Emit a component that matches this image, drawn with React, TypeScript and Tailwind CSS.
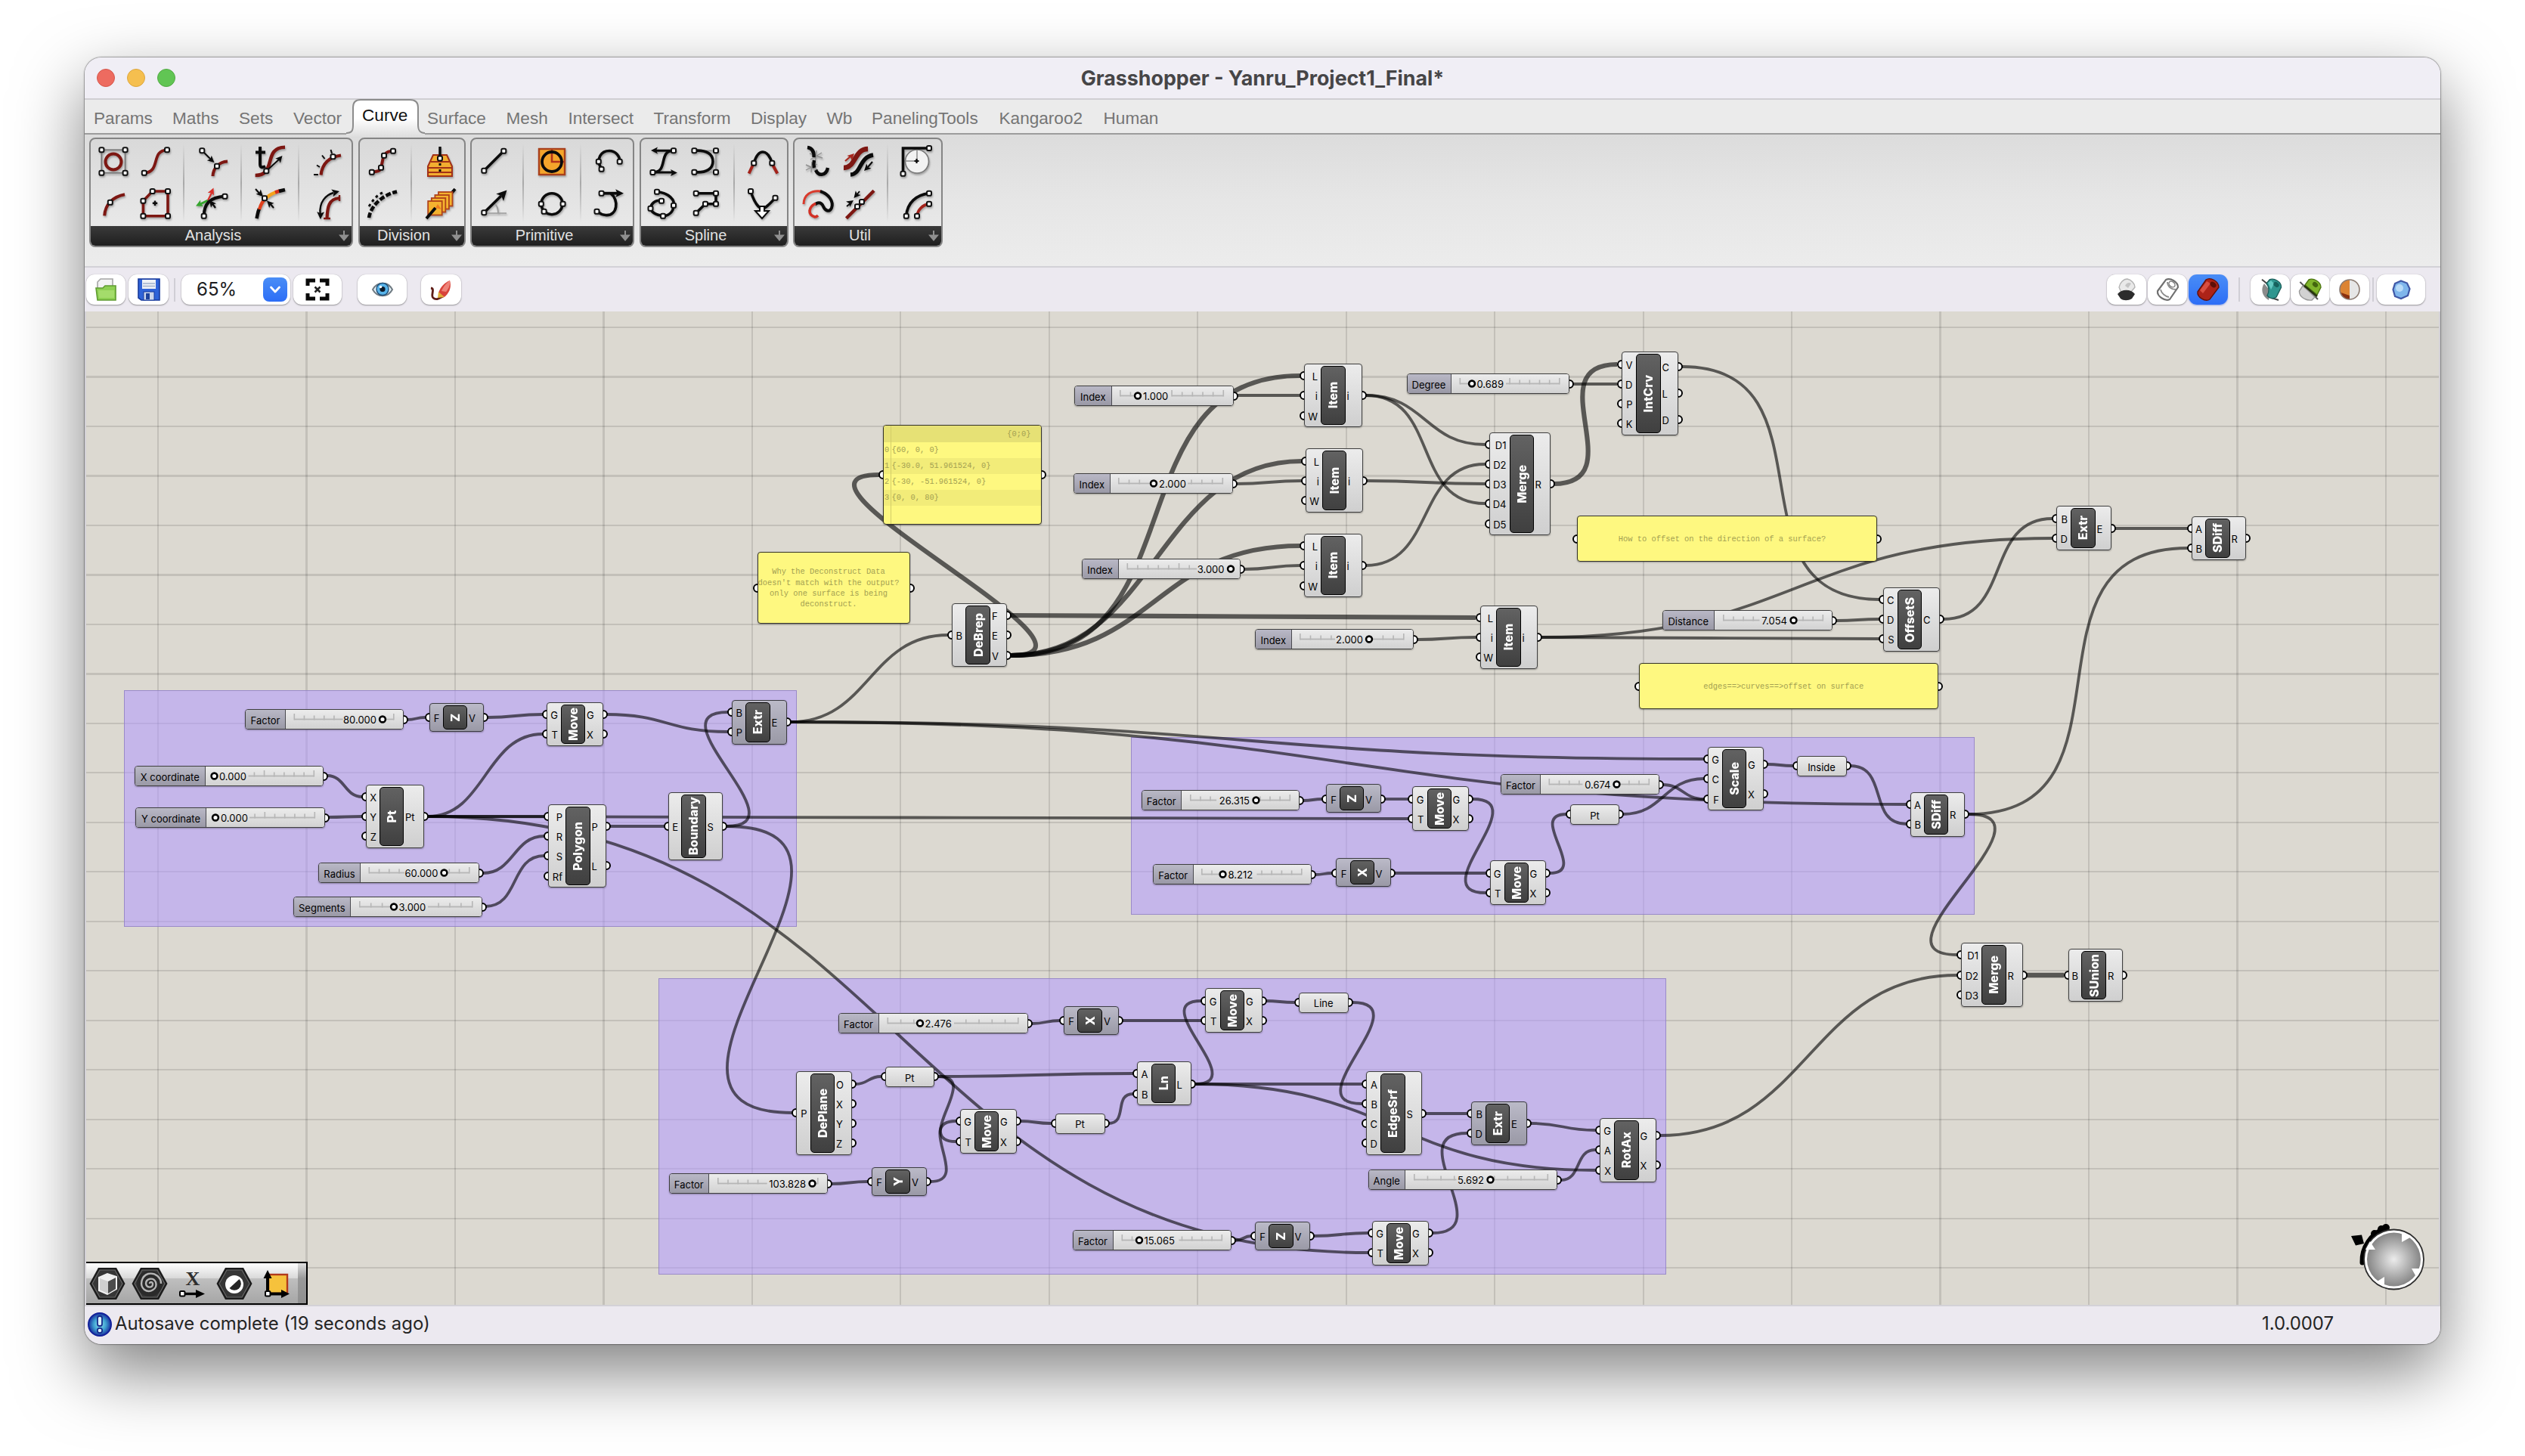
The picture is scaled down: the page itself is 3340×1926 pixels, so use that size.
import React from "react";

/* ------------------------------------------------------------------ */
/* Ribbon icons, each drawn on a 40 x 40 grid                          */
/* ------------------------------------------------------------------ */

const RED = "#7d1712";

type Pt2 = [number, number];

function Knots({ at }: { at: Pt2[] }) {
  return (
    <>
      {at.map(([x, y], i) => (
        <rect key={i} x={x - 3} y={y - 3} width={6} height={6} rx={1.8} fill="#fff" stroke="#111" strokeWidth={2} />
      ))}
    </>
  );
}

function K({ d, c = "#0b0b0b", w = 3.6 }: { d: string; c?: string; w?: number }) {
  return <path d={d} fill="none" stroke={c} strokeWidth={w} />;
}

function Head({ x, y, a, s = 1, c = "#0b0b0b" }: { x: number; y: number; a: number; s?: number; c?: string }) {
  return <path d="M0 0 L-9 -4.5 L-7 0 L-9 4.5 Z" fill={c} transform={`translate(${x} ${y}) rotate(${a}) scale(${s})`} />;
}

const ICONS: Record<string, React.ReactNode> = {
  bounds: (
    <>
      <rect x={4.4} y={4.3} width={31.2} height={30.4} fill="none" stroke="#777" strokeWidth={1.8} />
      <circle cx={20} cy={20} r={10.5} fill="none" stroke={RED} strokeWidth={4} />
      <Knots at={[[4.4, 4.3], [35.6, 4.3], [4.4, 34.7], [35.6, 34.7]]} />
    </>
  ),
  curvature: (
    <>
      <K d="M5.8 34.7 C28 34 14 5 36 4.3" c={RED} w={3.8} />
      <Knots at={[[36, 4.3], [5.8, 34.7]]} />
    </>
  ),
  midpoint: (
    <>
      <K d="M8.2 35.3 C9 20 20 10 35 7.3" c={RED} w={4} />
      <Knots at={[[15.8, 17.7]]} />
    </>
  ),
  polygon: (
    <>
      <K d="M16.7 3 H37 V35.7 H4.4 V15.7 Z" c={RED} w={3.6} />
      <Knots at={[[16.7, 3], [37, 3], [37, 35.7], [4.4, 35.7], [4.4, 15.7]]} />
      <K d="M20 15.5 V22 M16.8 18.7 H23.2" w={2.4} />
    </>
  ),
  closest: (
    <>
      <K d="M6.3 5.3 L20 19" w={2} />
      <Head x={22.5} y={21} a={42} />
      <K d="M20.5 39 C21 29 28 20 40 19.5" c={RED} w={4} />
      <Knots at={[[6.3, 5.3], [26, 25.7]]} />
    </>
  ),
  frame: (
    <>
      <K d="M14 15 L2 21" c="#35a52d" w={3} />
      <Head x={-2} y={22.6} a={154} c="#35a52d" />
      <K d="M14 15 L20 3" c="#d8302a" w={2.2} />
      <Head x={21.5} y={-1.5} a={-66} c="#d8302a" />
      <K d="M8.7 35.7 C9 20 16 11 36.5 9.7" w={4.2} />
      <K d="M24 25 L19 18" w={2.2} />
      <Head x={16} y={15} a={-128} />
      <Knots at={[[36.5, 9.7], [8.7, 35.7]]} />
    </>
  ),
  evaluate: (
    <>
      <K d="M7 0 V23 C7 28 10 28 14 26 M1 7.5 H14" w={4} />
      <K d="M.6 38 C30 38 10 1 40 .7" c={RED} w={4.6} />
      <K d="M15.3 32.3 L33 16" w={2} />
      <Head x={36.5} y={12} a={-48} />
      <Knots at={[[15.3, 32.3]]} />
    </>
  ),
  gradientCurve: (
    <>
      <K d="M2.5 39 C4 33 4 30 6 26" w={4.6} />
      <K d="M6 27 C8 20 11 15 16 11" c="#e0401c" w={4.4} />
      <K d="M15 12 C19 8 23 6 28 4" c="#f6a21c" w={4.4} />
      <K d="M27 4.5 L33 2.4" c="#d4301c" w={4.6} />
      <K d="M32 2.8 L40 1" w={4.8} />
      <K d="M1 0 L8 8" w={2} />
      <Head x={11} y={10} a={45} />
      <K d="M25 25 L20 19" w={2} />
      <Head x={16} y={15.5} a={-135} />
      <Knots at={[[13, 12.3]]} />
    </>
  ),
  perpFrames: (
    <>
      <K d="M11.5 37.5 C13 24 20 14 38 11.5" c={RED} w={4.2} />
      <K d="M2 37 H8 M6 24.5 L10 27 M13 11.5 L16.5 16 M24.5 4 L26 9" w={2} />
      <Knots at={[[27.5, 13.3]]} />
    </>
  ),
  length: (
    <>
      <K d="M10.6 33 C9 17 18 8 28 5" w={2.4} />
      <Head x={10.8} y={40} a={92} s={1.1} />
      <Head x={36} y={3} a={-14} s={1.1} />
      <K d="M19.5 39 C20 24 22 13 35.6 12" c={RED} w={4.2} />
      <K d="M15 39 H24 M36 8 V16" c={RED} w={2.4} />
    </>
  ),
  divide: (
    <>
      <K d="M5.8 33.7 C12 33 17 33 18 27.7 C20 20 20 16 22 11.7 C25 6 30 6 34 5.7" c={RED} w={4} />
      <Knots at={[[5.8, 33.7], [18, 27.7], [22, 11.7], [34, 5.7]]} />
    </>
  ),
  dashes: (
    <>
      <path d="M2 38 C4 24 18 8 39 3.5" fill="none" stroke="#0b0b0b" strokeWidth={4.6} strokeDasharray="7 2.5" />
      <path d="M2 23 C8 14 12 8 22 4" fill="none" stroke="#0b0b0b" strokeWidth={3} strokeDasharray="3.5 4" />
    </>
  ),
  contour: (
    <>
      <path d="M11 11 H29 L36 26 V39 H4 V26 Z" fill="#f2ae30" stroke="#a23117" strokeWidth={2} />
      <path d="M8 20 H32 M5 28 H35 M4 34 H36" stroke="#a23117" strokeWidth={2} />
      <K d="M20 0 V14" w={3.4} />
      <K d="M20 22 V25 M20 30 V33" w={3} />
      <Knots at={[[20, 15.5]]} />
    </>
  ),
  frames: (
    <>
      <K d="M34 7 L40 0" w={4} />
      {[0, 1, 2, 3].map((i) => (
        <rect key={i} x={18 - i * 4.6} y={4 + i * 4} width={18.5} height={18.5} fill="#f4b32f" stroke="#b0421a" strokeWidth={1.8} />
      ))}
      <path d="M14 25 L17 20 L22 27 Z" fill="#ef7d1f" />
      <K d="M2 39 L14 25" w={4} />
    </>
  ),
  line: (
    <>
      <K d="M6.3 31.7 L32.3 5.7" />
      <Knots at={[[6.3, 31.7], [32.3, 5.7]]} />
    </>
  ),
  lineSDL: (
    <>
      <path d="M8 32 H36 M21 20 C25 24 25 28 25 32" fill="none" stroke="#9a9a9a" strokeWidth={1.6} />
      <K d="M6.3 31.3 L29 9" w={3.6} />
      <Head x={36.5} y={1.5} a={-46} s={1.5} />
      <Knots at={[[6.3, 31.3]]} />
    </>
  ),
  circle: (
    <>
      <rect x={3} y={3} width={34} height={34} fill="#f4a52b" stroke="#a9401c" strokeWidth={2.4} />
      <path d="M20 4 V20 H36" fill="none" stroke="#b3331a" strokeWidth={2.6} />
      <circle cx={20} cy={20} r={13} fill="none" stroke="#0b0b0b" strokeWidth={3.8} />
    </>
  ),
  circle3: (
    <>
      <circle cx={20} cy={19.7} r={14} fill="none" stroke="#0b0b0b" strokeWidth={3.6} />
      <Knots at={[[5.8, 19.7], [34.6, 19.7], [9.6, 29.7]]} />
    </>
  ),
  arc: (
    <>
      <K d="M9.6 29.7 C1 15 10 5.5 20 5.5 C28 5.5 34 12 33.7 19.7" />
      <Knots at={[[9.6, 29.7], [5.8, 19.7], [33.7, 19.7]]} />
    </>
  ),
  arcSED: (
    <>
      <K d="M9.6 5.7 H32" w={3.8} />
      <Head x={39} y={5.7} a={0} s={1.2} />
      <K d="M22 6 C33 14 31 36 15 34.5 C9 34 7 32 4 29.7" />
      <Knots at={[[9.6, 5.7], [3.5, 29.7]]} />
    </>
  ),
  bezier: (
    <>
      <K d="M33 5.3 H9 M5.4 34 H32" w={3} />
      <Head x={3} y={5} a={180} />
      <Head x={38} y={34.5} a={0} />
      <K d="M33 5.3 C12 5 27 34 5.4 34" />
      <Knots at={[[33, 5.3], [5.4, 34]]} />
    </>
  ),
  interpolate: (
    <>
      <K d="M11 3.7 C26 5 36 14 33 24 C31 34 22 37 16 35 C6 33 1 28 3 23 C5 17 12 14 17 15.7" />
      <Knots at={[[11, 3.7], [33, 21.7], [19, 35.7], [2.5, 25.7], [17, 15.7]]} />
    </>
  ),
  nurbs: (
    <>
      <path d="M5.4 5.3 H34 V33.7 H5.4" fill="none" stroke="#999" strokeWidth={1.8} />
      <K d="M5.4 5.3 C22 4 30 10 30 19.5 C30 29 22 35 5.4 33.7" />
      <Knots at={[[5.4, 5.3], [34, 5.3], [34, 33.7], [5.4, 33.7]]} />
    </>
  ),
  polyline: (
    <>
      <K d="M7.7 5.7 H34 V19.7 H20 L7.7 31.7" />
      <Knots at={[[7.7, 5.7], [34, 5.7], [34, 19.7], [20, 19.7], [7.7, 31.7]]} />
    </>
  ),
  blend: (
    <>
      <K d="M1.6 35.5 L8 22 M39.3 35.5 L32 22" c="#a3221a" w={4} />
      <K d="M8.2 21.7 C14 2 26 2 32.3 21.7" />
      <Knots at={[[8.2, 21.7], [32.3, 21.7]]} />
    </>
  ),
  catenary: (
    <>
      <K d="M4 3 C10 22 18 30 24 24 C28 21 32 17 36.5 11.7" />
      <path d="M16 23 H22 V29 H28 L19 39 L10 29 H16 Z" fill="#fff" stroke="#0b0b0b" strokeWidth={2} />
      <Knots at={[[4, 3], [36.5, 11.7]]} />
    </>
  ),
  explode: (
    <>
      <path d="M19 5 L17 22 M10 9 L27 15 M11 17 L26 8 M13 20 L12 34 M5 24 L21 31 M5 31 L20 23" stroke="#8f8f8f" strokeWidth={1.4} />
      <K d="M7 1 C14 2 16 7 15.5 14 M16 18 C15 22 15 24 16 28 M18 31 C22 40 32 38 34 28" w={4.4} />
    </>
  ),
  swirl: (
    <>
      <path d="M2 20 C2 8 12 1 25 3" fill="none" stroke="#d93a2c" strokeWidth={3} />
      <K d="M24 3 C36 7 42 17 39 25 C36 32 30 28 28 23 C25 16 19 18 17 21" w={4} />
      <path d="M18 19 C8 24 7 34 17 37 C19 37 20 36 21 35" fill="none" stroke="#d23024" strokeWidth={3.6} />
    </>
  ),
  flip: (
    <>
      <path d="M0 28 C16 28 14 3 32 3" fill="none" stroke={RED} strokeWidth={6.4} />
      <path d="M9 37 C24 36 20 14 39 11" fill="none" stroke="#0b0b0b" strokeWidth={5.4} />
      <K d="M2 19 L10 12" c="#a8271d" w={2.2} />
      <Head x={14} y={9} a={-44} c="#a8271d" />
      <K d="M38 20 L32 27" w={2.2} />
      <Head x={27} y={32} a={135} />
    </>
  ),
  join: (
    <>
      <K d="M3.5 38.7 L40 2.3" c={RED} w={4.4} />
      <K d="M21 3 L17 8 M4 23 L9 19" w={2} />
      <Head x={13.5} y={12} a={130} />
      <Head x={13} y={15} a={-35} />
      <Knots at={[[24, 17], [18, 23.3]]} />
    </>
  ),
  fillet: (
    <>
      <circle cx={21} cy={19.5} r={15.5} fill="#f2f2f2" stroke="#777" strokeWidth={1.6} />
      <path d="M4 19 H21 V4" fill="none" stroke="#888" strokeWidth={1.4} />
      <K d="M2.5 35.7 V2 H37" w={3.6} />
      <K d="M20.5 16 V22 M17.5 19 H23.5" w={2.2} />
      <Knots at={[[2.5, 35.7], [37, 2]]} />
    </>
  ),
  offset: (
    <>
      <K d="M6.8 35.7 C8 18 20 8 37 5.7" w={3.8} />
      <K d="M21 35.7 C22 28 28 21 37 19.7" c="#a3221a" w={3.8} />
      <Knots at={[[6.8, 35.7], [37, 5.7], [21, 35.7], [37, 19.7]]} />
    </>
  ),
};

function RibbonIcon({ name }: { name: string }) {
  return (
    <svg viewBox="0 0 40 40" className="h-10 w-10 overflow-visible drop-shadow-[1px_2px_1px_rgba(0,0,0,0.28)]">
      {ICONS[name]}
    </svg>
  );
}

/* ------------------------------------------------------------------ */
/* Tabs and ribbon                                                     */
/* ------------------------------------------------------------------ */

const TABS: [string, number][] = [
  ["Params", 104],
  ["Maths", 88],
  ["Sets", 72],
  ["Vector", 91],
  ["Curve", 86],
  ["Surface", 104.5],
  ["Mesh", 82],
  ["Intersect", 113],
  ["Transform", 128.5],
  ["Display", 100.5],
  ["Wb", 59.5],
  ["PanelingTools", 168.5],
  ["Kangaroo2", 138],
  ["Human", 100],
];

function TabStrip() {
  return (
    <div className="relative flex h-[44px] items-stretch bg-[#ebebeb] pl-[12px]">
      {TABS.map(([name, w]) =>
        name === "Curve" ? (
          <div key={name} className="relative" style={{ width: w }}>
            <svg viewBox="0 0 104 50" className="absolute -left-[21px] -top-px z-10 h-[50px] w-[104px] overflow-visible">
              <defs>
                <linearGradient id="tab" x1="0" y1="0" x2="0" y2="1">
                  <stop offset="0" stopColor="#fff" />
                  <stop offset="0.5" stopColor="#fff" />
                  <stop offset="1" stopColor="#dedede" />
                </linearGradient>
              </defs>
              <path
                d="M0 45 C8 45 9 41 9 34 V11 Q9 1 19 1 H84 Q95 1 95 11 V34 C95 41 97 45 104 45 V50 H0 Z"
                fill="url(#tab)"
              />
              <path
                d="M0 45 C8 45 9 41 9 34 V11 Q9 1 19 1 H84 Q95 1 95 11 V34 C95 41 97 45 104 45"
                fill="none"
                stroke="#8c8c8c"
                strokeWidth={2}
              />
            </svg>
            <span className="relative z-20 block pt-[6px] leading-[30px] text-[#111]">Curve</span>
          </div>
        ) : (
          <span key={name} className="block pt-[10px] leading-[30px] text-[#757575]" style={{ width: w }}>
            {name}
          </span>
        ),
      )}
    </div>
  );
}

type Section = string[][];
const GROUPS: { name: string; w: number; sections: Section[] }[] = [
  {
    name: "Analysis",
    w: 349,
    sections: [
      [["bounds", "midpoint"], ["curvature", "polygon"]],
      [["closest", "frame"]],
      [["evaluate", "gradientCurve"]],
      [["perpFrames", "length"]],
    ],
  },
  { name: "Division", w: 142, sections: [[["divide", "dashes"]], [["contour", "frames"]]] },
  { name: "Primitive", w: 217, sections: [[["line", "lineSDL"]], [["circle", "circle3"]], [["arc", "arcSED"]]] },
  { name: "Spline", w: 197, sections: [[["bezier", "interpolate"], ["nurbs", "polyline"]], [["blend", "catenary"]]] },
  { name: "Util", w: 198, sections: [[["explode", "swirl"], ["flip", "join"]], [["fillet", "offset"]]] },
];

function Ribbon() {
  return (
    <div className="flex h-[176px] items-start gap-[6.5px] border-t-2 border-[#9c9c9c] bg-linear-to-b from-[#dcdcdc] via-[#e6e6e6] to-[#ececec] pt-[4px] pl-[6px]">
      {GROUPS.map((g) => (
        <div
          key={g.name}
          className="flex h-[145px] flex-col overflow-hidden rounded-[8px] border-2 border-[#858585] bg-linear-to-b from-[#d9d9d9] to-[#ececec]"
          style={{ width: g.w }}
        >
          <div className="flex h-[115px] items-center pl-[10px]">
            {g.sections.map((s, i) => (
              <React.Fragment key={i}>
                {i > 0 && <div className="ml-[17px] mr-[17px] h-[104px] w-[2px] bg-linear-to-b from-transparent via-[#a9a9a9] to-transparent" />}
                <div className="flex gap-[15px]">
                  {s.map((col, j) => (
                    <div key={j} className="flex flex-col gap-[16px]">
                      {col.map((n) => (
                        <RibbonIcon key={n} name={n} />
                      ))}
                    </div>
                  ))}
                </div>
              </React.Fragment>
            ))}
          </div>
          <div className="flex flex-1 items-center bg-linear-to-b from-[#3a3a3a] to-[#1f1f1f] pr-[2px] text-[20px] leading-none text-[#e2e2e2]">
            <span className="flex-1 pr-[3px] pb-[3px] text-center">{g.name}</span>
            <svg viewBox="0 0 16 16" className="h-4 w-4">
              <path d="M7 1 H9 V6.5 H15 L8 15 L1 6.5 H7 Z" fill="#8f8f8f" />
            </svg>
          </div>
        </div>
      ))}
    </div>
  );
}

/* ------------------------------------------------------------------ */
/* Canvas toolbar                                                      */
/* ------------------------------------------------------------------ */

function Btn({ w, ml = 0, active, children }: { w: number; ml?: number; active?: boolean; children: React.ReactNode }) {
  return (
    <div
      className={
        active
          ? "flex h-[40px] shrink-0 items-center justify-center rounded-[11px] bg-linear-to-b from-[#4a8df6] to-[#2d6df6] shadow-[0_1px_2px_rgba(0,60,200,0.4)]"
          : "flex h-[40px] shrink-0 items-center justify-center rounded-[11px] bg-white shadow-[0_1px_2px_rgba(0,0,0,0.35),0_0_1px_rgba(0,0,0,0.25)]"
      }
      style={{ width: w, marginLeft: ml }}
    >
      {children}
    </div>
  );
}

const SVG32 = "h-8 w-8 overflow-visible";

function Toolbar() {
  return (
    <div className="flex h-[60px] items-center border-t-2 border-[#d3d1d7] bg-[#ece9f0] pl-[2px]">
      <Btn w={52}>
        <svg viewBox="0 0 32 32" className={SVG32}>
          <path d="M5 16 V6 L9 2 H25 V18 Z" fill="#f3f3f3" stroke="#a5a5a5" strokeWidth={1.6} />
          <path d="M3 14 H12 L15 11 H29 V30 H5 Z" fill="#8dcf52" stroke="#5f9c31" strokeWidth={1.6} />
          <path d="M6 17 H27 V27 H7 Z" fill="#a4dc6b" />
        </svg>
      </Btn>
      <Btn w={53} ml={4}>
        <svg viewBox="0 0 32 32" className={SVG32}>
          <path d="M2 2 H30 V30 H6 L2 27 Z" fill="#2f63d8" stroke="#173a9c" strokeWidth={1.6} />
          <rect x={7} y={3} width={18} height={12} fill="#eef1f6" />
          <path d="M8 8 H24 M8 11.5 H24" stroke="#9fb0cc" strokeWidth={1.4} />
          <rect x={9} y={19} width={14} height={11} fill="#ccd6ec" stroke="#173a9c" strokeWidth={1} />
          <rect x={12} y={21} width={5} height={8} fill="#1e429c" />
        </svg>
      </Btn>
      <div className="ml-[7px] h-[31px] w-[2px] bg-[#d0ced5]" />
      <div className="ml-[8px] flex h-[40px] w-[144px] items-center rounded-[11px] bg-white pl-[20px] pr-[4px] shadow-[0_1px_2px_rgba(0,0,0,0.35),0_0_1px_rgba(0,0,0,0.25)]">
        <span className="flex-1 font-[Inter] text-[24px] leading-none text-[#1d1d1f]">65%</span>
        <div className="flex h-[32px] w-[32px] items-center justify-center rounded-[8px] bg-linear-to-b from-[#4a8df6] to-[#2d6df6]">
          <svg viewBox="0 0 16 16" className="h-4 w-4">
            <path d="M2.5 5 L8 11 L13.5 5" fill="none" stroke="#fff" strokeWidth={2.8} strokeLinecap="round" strokeLinejoin="round" />
          </svg>
        </div>
      </div>
      <Btn w={64} ml={4}>
        <svg viewBox="0 0 32 32" className={SVG32}>
          <path
            d="M3 11 V4 H13 M19 4 H29 V11 M3 21 V28 H13 M19 28 H29 V21"
            fill="none"
            stroke="#0a0a0a"
            strokeWidth={5}
          />
          <path d="M12.5 12.5 L19.5 19.5 M19.5 12.5 L12.5 19.5" stroke="#222" strokeWidth={2.6} />
        </svg>
      </Btn>
      <Btn w={65} ml={21}>
        <svg viewBox="0 0 32 32" className={SVG32}>
          <path d="M3 16 C9 5 23 5 29 16 C23 27 9 27 3 16 Z" fill="#e3f1f8" stroke="#6f7a82" strokeWidth={2} />
          <circle cx={16} cy={15.5} r={8} fill="#58b4ea" stroke="#1f4e78" strokeWidth={1.4} />
          <circle cx={16} cy={15.5} r={3.6} fill="#0b1a2b" />
          <circle cx={13.5} cy={12.5} r={1.8} fill="#fff" />
        </svg>
      </Btn>
      <Btn w={53} ml={19}>
        <svg viewBox="0 0 32 32" className={SVG32}>
          <path d="M2 14 C8 15 1 24 5 27 C9 31 14 27 18 25" fill="none" stroke="#5f1d17" strokeWidth={2.8} />
          <path d="M12 20 C15 12 20 7 27 4 C29 11 28 18 21 25 C18 28 14 26 12 20 Z" fill="#d8433a" />
          <path d="M16 18 C19 11 23 7 27 4 C28 9 26 14 22 19 Z" fill="#ee8379" />
          <path d="M12 19 L20 26 L11 27 Z" fill="#dfae3a" />
        </svg>
      </Btn>
      <div className="flex-1" />
      <Btn w={52}>
        <svg viewBox="0 0 32 32" className={SVG32}>
          <path d="M6 13 C7 7 12 2 17 2 C22 3 27 8 27 13 L21 20 H9 Z" fill="#e9e9e9" stroke="#b3b3b3" strokeWidth={1.4} />
          <path d="M14 11 C16 7 19 6 22 8 L18 14 Z" fill="#c4c4c4" />
          <path d="M4 22 C9 15 22 15 27 22 L23 28 C18 31 12 31 8 28 Z" fill="#2c2c2c" />
        </svg>
      </Btn>
      <Btn w={52} ml={2}>
        <svg viewBox="0 0 32 32" className={SVG32}>
          <path d="M3 18 L14 3 C20 0 30 6 30 13 L19 29 C13 32 2 25 3 18 Z" fill="#fff" stroke="#707070" strokeWidth={2.2} />
          <path d="M7 16 C8 21 13 25 18 26 M16 6 C16 12 21 16 27 16" fill="none" stroke="#8c8c8c" strokeWidth={1.8} />
          <ellipse cx={22} cy={9} rx={4.5} ry={3.2} fill="#fff" stroke="#777" strokeWidth={1.4} transform="rotate(40 22 9)" />
        </svg>
      </Btn>
      <Btn w={52} ml={2} active>
        <svg viewBox="0 0 32 32" className={SVG32}>
          <path d="M2 19 L13 3 C19 -1 30 5 30 13 L18 29 C12 33 1 26 2 19 Z" fill="#ad2318" stroke="#631009" strokeWidth={1.4} />
          <path d="M5 17 L14 5 L19 8 L9 21 Z" fill="#d84e40" />
          <ellipse cx={22.5} cy={9.5} rx={4.5} ry={3.2} fill="#5d0f09" transform="rotate(40 22.5 9.5)" />
        </svg>
      </Btn>
      <div className="ml-[14px] h-[32px] w-[2px] bg-[#d0ced5]" />
      <Btn w={52} ml={14}>
        <svg viewBox="0 0 32 32" className={SVG32}>
          <path d="M8 8 C3 15 5 25 14 30 L16 18 Z" fill="#8a8a8a" />
          <path d="M5 2.7 L14 10 M18 27 L27 30" stroke="#444" strokeWidth={2} />
          <path d="M11 8 L15 3 C21 0 31 6 30.5 13 L24 26 C20 29 15 28 12 24 C15 18 15 13 11 8 Z" fill="#2f968f" stroke="#1c5f5b" strokeWidth={1.4} />
          <path d="M13 7 L17 4 L21 8 L17 16 Z" fill="#63c9c2" />
          <ellipse cx={24} cy={9.5} rx={4} ry={3} fill="#17625e" transform="rotate(40 24 9.5)" />
        </svg>
      </Btn>
      <Btn w={52} ml={1}>
        <svg viewBox="0 0 32 32" className={SVG32}>
          <path d="M2.4 6 L26 29" stroke="#555" strokeWidth={2} />
          <path d="M1.5 18 L6 11 L22 26 L18 30 C9 31 1 25 1.5 18 Z" fill="#d2d2d2" stroke="#999" strokeWidth={1.4} />
          <path d="M9 10 L14 3 C20 0 30 6 30 13 L25 23 Z" fill="#7fb42b" stroke="#4b7410" strokeWidth={1.4} />
          <path d="M8 11 L25 25" stroke="#26340d" strokeWidth={2.4} />
          <ellipse cx={22.5} cy={9.5} rx={4} ry={3} fill="#44660f" transform="rotate(40 22.5 9.5)" />
        </svg>
      </Btn>
      <Btn w={52}>
        <svg viewBox="0 0 32 32" className={SVG32}>
          <path d="M16 3 A13 13 0 0 0 16 29 Z" fill="#dc8433" />
          <path d="M4.5 20 A13 13 0 0 0 16 29 V24 Z" fill="#8a3010" />
          <path d="M16 3 A13 13 0 0 1 16 29 Z" fill="#e6e6e6" />
          <circle cx={16} cy={16} r={13} fill="none" stroke="#8b7a70" strokeWidth={1.6} />
        </svg>
      </Btn>
      <div className="ml-[4px] h-[32px] w-[2px] bg-[#d0ced5]" />
      <Btn w={64} ml={4}>
        <svg viewBox="0 0 32 32" className={SVG32}>
          <path d="M16 4.5 L24 7.5 L27.5 15 L25 24 L16 28 L8 25 L5.5 16 L8 8 Z" fill="#7fb6ec" stroke="#3f57a6" strokeWidth={2.2} />
          <circle cx={14} cy={14} r={5} fill="#b9dbf8" />
        </svg>
      </Btn>
      <div className="w-[20px]" />
    </div>
  );
}

/* ------------------------------------------------------------------ */
/* Graph data (window coordinates)                                     */
/* ------------------------------------------------------------------ */

type Port = [string, number];
type Comp = { t: string; x: number; r: number; y: number; b: number; c: [number, number]; i: Port[]; o: Port[]; g?: boolean };

const COMPS: Comp[] = [
  { t: "Z", x: 567.5, r: 640, y: 932, b: 970, c: [585.5, 618], i: [["F", 951]], o: [["V", 951]], g: true },
  { t: "Move", x: 722.5, r: 797.5, y: 931, b: 989, c: [742, 774], i: [["G", 947], ["T", 973]], o: [["G", 947], ["X", 973]] },
  { t: "Extr", x: 968, r: 1041, y: 928, b: 987, c: [986, 1018.5], i: [["B", 944], ["P", 970]], o: [["E", 957]], g: true },
  { t: "Pt", x: 484, r: 561, y: 1040, b: 1124, c: [502, 534], i: [["X", 1056], ["Y", 1082], ["Z", 1108]], o: [["Pt", 1082]] },
  { t: "Polygon", x: 725, r: 802, y: 1066, b: 1176, c: [748, 780.5], i: [["P", 1082], ["R", 1108], ["S", 1134], ["Rf", 1161]], o: [["P", 1095], ["L", 1147]] },
  { t: "Boundary", x: 884, r: 956, y: 1050, b: 1140, c: [901, 933.5], i: [["E", 1095]], o: [["S", 1095]] },
  { t: "DeBrep", x: 1259, r: 1332, y: 800, b: 884, c: [1277, 1310], i: [["B", 842]], o: [["F", 816], ["E", 842], ["V", 869]] },
  { t: "Item", x: 1725, r: 1802, y: 483, b: 567, c: [1747, 1779.5], i: [["L", 499], ["i", 525], ["W", 552]], o: [["i", 525]] },
  { t: "Item", x: 1727, r: 1803, y: 595, b: 680, c: [1749, 1781], i: [["L", 612], ["i", 638], ["W", 664]], o: [["i", 638]] },
  { t: "Item", x: 1725, r: 1802, y: 708, b: 792, c: [1747, 1779.5], i: [["L", 724], ["i", 750], ["W", 777]], o: [["i", 750]] },
  { t: "Merge", x: 1969.5, r: 2050.5, y: 574, b: 710, c: [1996.5, 2028.5], i: [["D1", 590], ["D2", 616], ["D3", 642], ["D4", 668], ["D5", 695]], o: [["R", 642]] },
  { t: "Item", x: 1957.5, r: 2033.5, y: 803, b: 887, c: [1979, 2011.5], i: [["L", 819], ["i", 845], ["W", 871]], o: [["i", 845]] },
  { t: "IntCrv", x: 2144.5, r: 2219.5, y: 467, b: 578, c: [2163.5, 2196.5], i: [["V", 484], ["D", 510], ["P", 536], ["K", 562]], o: [["C", 487], ["L", 522], ["D", 557]] },
  { t: "OffsetS", x: 2491, r: 2565.5, y: 779, b: 864, c: [2509.5, 2542], i: [["C", 795], ["D", 821], ["S", 847]], o: [["C", 821]] },
  { t: "Extr", x: 2720, r: 2793, y: 671, b: 730, c: [2739, 2771.5], i: [["B", 688], ["D", 714]], o: [["E", 701]] },
  { t: "SDiff", x: 2899, r: 2971, y: 685, b: 743, c: [2917, 2949.5], i: [["A", 701], ["B", 727]], o: [["R", 714]] },
  { t: "Z", x: 1754, r: 1827, y: 1039, b: 1077, c: [1772, 1804], i: [["F", 1059]], o: [["V", 1059]], g: true },
  { t: "Move", x: 1868, r: 1943, y: 1042, b: 1101, c: [1887.5, 1919.5], i: [["G", 1059], ["T", 1085]], o: [["G", 1059], ["X", 1085]] },
  { t: "X", x: 1767, r: 1840, y: 1137, b: 1175, c: [1785.5, 1817.5], i: [["F", 1157]], o: [["V", 1157]], g: true },
  { t: "Move", x: 1970.5, r: 2045, y: 1140, b: 1199, c: [1989.5, 2021.5], i: [["G", 1157], ["T", 1183]], o: [["G", 1157], ["X", 1183]] },
  { t: "Scale", x: 2259, r: 2333, y: 990, b: 1074, c: [2278, 2310], i: [["G", 1006], ["C", 1032], ["F", 1059]], o: [["G", 1013], ["X", 1052]] },
  { t: "SDiff", x: 2527, r: 2599, y: 1050, b: 1109, c: [2545, 2577], i: [["A", 1066], ["B", 1092]], o: [["R", 1079]] },
  { t: "X", x: 1407, r: 1480, y: 1333, b: 1371, c: [1425, 1458], i: [["F", 1352]], o: [["V", 1352]], g: true },
  { t: "DePlane", x: 1053, r: 1127, y: 1419, b: 1530, c: [1071.5, 1104], i: [["P", 1474]], o: [["O", 1436], ["X", 1462], ["Y", 1488], ["Z", 1514]] },
  { t: "Move", x: 1269.5, r: 1344.5, y: 1469, b: 1528, c: [1289, 1321], i: [["G", 1485], ["T", 1512]], o: [["G", 1485], ["X", 1512]] },
  { t: "Ln", x: 1504, r: 1576, y: 1406, b: 1464, c: [1522.5, 1554.5], i: [["A", 1422], ["B", 1449]], o: [["L", 1436]] },
  { t: "Y", x: 1153, r: 1225.5, y: 1546, b: 1584, c: [1171, 1204], i: [["F", 1565]], o: [["V", 1565]], g: true },
  { t: "Move", x: 1594, r: 1669.5, y: 1309, b: 1368, c: [1613.5, 1646], i: [["G", 1326], ["T", 1352]], o: [["G", 1326], ["X", 1352]] },
  { t: "EdgeSrf", x: 1806.5, r: 1880.5, y: 1419, b: 1530, c: [1826, 1858.5], i: [["A", 1436], ["B", 1462], ["C", 1488], ["D", 1514]], o: [["S", 1475]] },
  { t: "Extr", x: 1945.5, r: 2019.5, y: 1459, b: 1517, c: [1965, 1997], i: [["B", 1475], ["D", 1501]], o: [["E", 1488]], g: true },
  { t: "RotAx", x: 2115.5, r: 2190.5, y: 1481, b: 1566, c: [2135, 2167.5], i: [["G", 1497], ["A", 1523], ["X", 1550]], o: [["G", 1504], ["X", 1543]] },
  { t: "Z", x: 1660, r: 1732.5, y: 1618, b: 1656, c: [1678, 1710.5], i: [["F", 1637]], o: [["V", 1637]], g: true },
  { t: "Move", x: 1814.5, r: 1889.5, y: 1617, b: 1676, c: [1834, 1866], i: [["G", 1633], ["T", 1659]], o: [["G", 1633], ["X", 1659]] },
  { t: "Merge", x: 2594, r: 2675.5, y: 1249, b: 1334, c: [2621, 2653.5], i: [["D1", 1265], ["D2", 1292], ["D3", 1318]], o: [["R", 1292]] },
  { t: "SUnion", x: 2735.5, r: 2807.5, y: 1257, b: 1327, c: [2753, 2786], i: [["B", 1292]], o: [["R", 1292]] },
];

/* label, value, left, right, top, divider, knob, value on the left of the knob */
const SLIDERS: [string, string, number, number, number, number, number, boolean][] = [
  ["Factor", "80.000", 324, 534, 940, 377, 506, true],
  ["X coordinate", "0.000", 177.5, 428, 1015, 271, 283, false],
  ["Y coordinate", "0.000", 179, 429.5, 1070, 272, 285, false],
  ["Radius", "60.000", 421, 634, 1143, 476, 587.5, true],
  ["Segments", "3.000", 387.5, 637.5, 1188, 463, 520.5, false],
  ["Index", "1.000", 1421, 1631.5, 512, 1469.5, 1505, false],
  ["Index", "2.000", 1420, 1630.5, 628, 1467.5, 1526, false],
  ["Index", "3.000", 1430.5, 1640.5, 741, 1478.5, 1627.5, true],
  ["Index", "2.000", 1660, 1870, 834, 1707.5, 1811, true],
  ["Degree", "0.689", 1860.5, 2075.5, 496, 1918.5, 1946.5, false],
  ["Distance", "7.054", 2198.5, 2424, 809, 2267, 2372, true],
  ["Factor", "26.315", 1509.5, 1719, 1047, 1562, 1661, true],
  ["Factor", "8.212", 1525, 1735, 1145, 1577.5, 1617.5, false],
  ["Factor", "0.674", 1985, 2194.5, 1026, 2037, 2138.5, true],
  ["Factor", "2.476", 1108.5, 1359.5, 1342, 1161.5, 1216.5, false],
  ["Factor", "103.828", 884.5, 1094.5, 1554, 937, 1074, true],
  ["Factor", "15.065", 1418.5, 1629, 1629, 1471.5, 1506.5, false],
  ["Angle", "5.692", 1809.5, 2060, 1549, 1858, 1971, true],
];

const PARAMS: [string, number, number, number][] = [
  ["Pt", 2077, 2142, 1066],
  ["Inside", 2376.5, 2442.5, 1002],
  ["Pt", 1170.5, 1236, 1413],
  ["Pt", 1395.5, 1461.5, 1474.5],
  ["Line", 1717.5, 1784, 1314.5],
];

/* x1, y1, x2, y2, width */
const WIRES: number[][] = [
  [539, 954, 562, 951],
  [645, 951, 718, 947],
  [802, 947, 963, 970],
  [433, 1028, 479, 1056],
  [434, 1083, 479, 1082],
  [566, 1082, 718, 973],
  [566, 1082, 720, 1082],
  [566, 1082, 1863, 1085],
  [566, 1082, 1810, 1659],
  [639, 1157, 720, 1108],
  [642, 1201, 720, 1134],
  [807, 1095, 879, 1095],
  [961, 1095, 963, 944],
  [961, 1095, 1048, 1474],
  [1046, 957, 1254, 842],
  [1046, 957, 2254, 1006],
  [1046, 957, 2522, 1066],
  [1337, 869, 1163, 630, 6.2],
  [1337, 869, 1720, 499, 6.2],
  [1337, 869, 1722, 612, 6.2],
  [1337, 869, 1720, 724, 6.2],
  [1337, 816, 1952, 819, 6.2],
  [1636, 525, 1720, 525],
  [1635, 642, 1722, 638],
  [1645, 755, 1720, 750],
  [1875, 848, 1952, 845],
  [1807, 525, 1964, 590],
  [1807, 525, 1964, 668],
  [1808, 638, 1964, 642],
  [1807, 750, 1964, 616],
  [2055, 642, 2139, 484, 6.2],
  [2080, 510, 2139, 510],
  [2225, 487, 2486, 795],
  [2429, 823, 2486, 821],
  [2038, 845, 2486, 847],
  [2038, 845, 2715, 714],
  [2571, 821, 2715, 688],
  [2798, 701, 2894, 701],
  [2604, 1079, 2894, 727],
  [2604, 1079, 2589, 1265],
  [1724, 1061, 1749, 1059],
  [1832, 1059, 1863, 1059],
  [1948, 1059, 1965, 1183],
  [1740, 1159, 1762, 1157],
  [1845, 1157, 1965, 1157],
  [2050, 1157, 2072, 1079],
  [2147, 1079, 2254, 1032],
  [2199, 1040, 2254, 1059],
  [2338, 1013, 2371, 1015],
  [2447, 1015, 2522, 1092],
  [2196, 1504, 2589, 1292],
  [2680, 1292, 2730, 1292, 6.6],
  [1365, 1356, 1402, 1352],
  [1485, 1352, 1589, 1352],
  [1132, 1436, 1165, 1426],
  [1241, 1426, 1499, 1422],
  [1241, 1426, 1264, 1512],
  [1099, 1568, 1148, 1565],
  [1231, 1565, 1264, 1485],
  [1349, 1485, 1390, 1488],
  [1466, 1488, 1499, 1449],
  [1581, 1436, 1589, 1326],
  [1581, 1436, 1801, 1436],
  [1581, 1436, 2110, 1550],
  [1674, 1326, 1712, 1328],
  [1789, 1328, 1801, 1462],
  [1886, 1475, 1940, 1475],
  [2025, 1488, 2110, 1497],
  [2065, 1563, 2110, 1523],
  [1634, 1643, 1655, 1637],
  [1738, 1637, 1809, 1633],
  [1895, 1633, 1940, 1501],
];

function wirePath([x1, y1, x2, y2]: number[]) {
  const d = Math.max((x2 - x1) / 2, Math.abs(y2 - y1) * 0.68);
  return `M${x1} ${y1} C${x1 + d} ${y1} ${x2 - d} ${y2} ${x2} ${y2}`;
}

const GRID_X: [number, number][] = [
  [208, 2], [404, 3], [601, 2], [797, 3], [994, 2], [1190, 2], [1387, 2], [1583, 2],
  [1780, 2], [1976, 2], [2173, 2], [2369, 2], [2565, 3], [2762, 2], [2958, 3], [3155, 2],
];
const GRID_Y: [number, number][] = [
  [434, 2], [499, 3], [565, 2], [630, 3], [696, 2], [761, 3], [827, 2], [892, 3], [958, 2], [1023, 2],
  [1089, 2], [1154, 2], [1220, 2], [1285, 2], [1351, 2], [1416, 2], [1482, 2], [1547, 2], [1613, 2], [1678, 2],
];
const AREAS: number[][] = [
  [164, 915, 890, 313],
  [1496, 977, 1116, 235],
  [871, 1296, 1333, 392],
];

/* ------------------------------------------------------------------ */
/* Graph items                                                         */
/* ------------------------------------------------------------------ */

function Dot({ x, y }: { x: number; y: number }) {
  return (
    <div
      className="absolute h-[12px] w-[12px] rounded-full border-[2.5px] border-black bg-white"
      style={{ left: x - 6, top: y - 6 }}
    />
  );
}

function Component({ n }: { n: Comp }) {
  const w = n.r - n.x;
  const h = n.b - n.y;
  return (
    <div className="absolute" style={{ left: n.x, top: n.y, width: w, height: h }}>
      {n.i.map(([, y], k) => (
        <Dot key={"i" + k} x={0} y={y - n.y} />
      ))}
      {n.o.map(([, y], k) => (
        <Dot key={"o" + k} x={w} y={y - n.y} />
      ))}
      <div
        className={
          n.g
            ? "absolute inset-0 rounded-[4px] border-[1.5px] border-[#3c3c42] bg-linear-to-b from-[#bbbac8] to-[#9a99a6] shadow-[0_1px_2px_rgba(0,0,0,0.3)]"
            : "absolute inset-0 rounded-[4px] border-[1.5px] border-[#3f3f3f] bg-linear-to-b from-[#ececec] to-[#cfcfcf] shadow-[0_1px_2px_rgba(0,0,0,0.3)]"
        }
      />
      <div
        className="absolute top-[3px] bottom-[3px] flex items-center justify-center rounded-[5px] border-[1.5px] border-black bg-linear-to-b from-[#626262] to-[#404040]"
        style={{ left: n.c[0] - n.x, width: n.c[1] - n.c[0] }}
      >
        <span className="rotate-180 text-[16px] leading-none font-extrabold whitespace-nowrap text-white [writing-mode:vertical-rl]">
          {n.t}
        </span>
      </div>
      {n.i.map(([s, y], k) => (
        <span
          key={"l" + k}
          className="absolute text-[13px] leading-[16px] whitespace-nowrap text-black"
          style={{ right: n.r - n.c[0] + 4, top: y - n.y - 7 }}
        >
          {s}
        </span>
      ))}
      {n.o.map(([s, y], k) => (
        <span
          key={"r" + k}
          className="absolute text-[13px] leading-[16px] whitespace-nowrap text-black"
          style={{ left: n.c[1] - n.x + 2, top: y - n.y - 7 }}
        >
          {s}
        </span>
      ))}
    </div>
  );
}

function Slider({ s }: { s: (typeof SLIDERS)[number] }) {
  const [label, value, x, r, y, div, knob, before] = s;
  const a = div + 12.5;
  const b = r - 13;
  const len = value.length * 7.4 + 8;
  const from = before ? knob - len : knob - 5;
  const to = before ? knob + 5 : knob + len;
  const ticks = Array.from({ length: 11 }, (_, i) => a + ((b - a) * i) / 10);
  return (
    <div className="absolute" style={{ left: x, top: y, width: r - x, height: 27 }}>
      <Dot x={r - x} y={13.5} />
      <div className="absolute inset-0 flex overflow-hidden rounded-[4px] border-[1.5px] border-[#3f3f3f] shadow-[0_1px_2px_rgba(0,0,0,0.3)]">
        <div
          className="flex items-center justify-center border-r border-[#4a4a50] bg-linear-to-b from-[#b9b8c6] to-[#9a99a6] pt-[3px] text-[13px] leading-none whitespace-nowrap text-black"
          style={{ width: div - x }}
        >
          {label}
        </div>
        <div className="flex-1 bg-linear-to-b from-[#ececec] to-[#d2d2d2]" />
      </div>
      <svg className="absolute inset-0 h-full w-full">
        <g fill="#b6b6b6">
          {ticks
            .filter((t) => t < from || t > to)
            .map((t, i) => (
              <rect
                key={i}
                x={t - x - 1}
                y={t === ticks[0] || t === ticks[5] || t === ticks[10] ? 6 : 8.5}
                width={1.6}
                height={t === ticks[0] || t === ticks[5] || t === ticks[10] ? 8.5 : 6}
              />
            ))}
          {from > a && <rect x={a - x} y={12.6} width={from - a} height={1.8} />}
          {to < b && <rect x={to - x} y={12.6} width={b - to} height={1.8} />}
        </g>
        <circle cx={knob - x} cy={13.5} r={3.9} fill="#fff" stroke="#000" strokeWidth={2.6} />
      </svg>
      <span
        className="absolute top-[6px] text-[13px] leading-[17px] whitespace-nowrap text-black"
        style={before ? { right: r - knob + 8 } : { left: knob - x + 7 }}
      >
        {value}
      </span>
    </div>
  );
}

function Param({ p }: { p: (typeof PARAMS)[number] }) {
  const [label, x, r, y] = p;
  return (
    <div className="absolute" style={{ left: x, top: y, width: r - x, height: 27 }}>
      <Dot x={0} y={13} />
      <Dot x={r - x} y={13} />
      <div className="absolute inset-0 flex items-center justify-center rounded-[4px] border-[1.5px] border-[#3f3f3f] bg-linear-to-b from-[#ececec] to-[#d0d0d0] pt-[3px] text-[13px] leading-none text-black shadow-[0_1px_2px_rgba(0,0,0,0.3)]">
        {label}
      </div>
    </div>
  );
}

const PANEL_BOX = "absolute inset-0 overflow-hidden rounded-[4px] border-[1.5px] border-[#33322a] bg-[#fef880] font-['Liberation_Mono'] text-[10.4px] text-[#a3a052] shadow-[0_1px_2px_rgba(0,0,0,0.3)]";

function Note({ x, y, w, h, lines }: { x: number; y: number; w: number; h: number; lines: string[] }) {
  return (
    <div className="absolute" style={{ left: x, top: y, width: w, height: h }}>
      <Dot x={0} y={h / 2} />
      <Dot x={w} y={h / 2} />
      <div className={PANEL_BOX}>
        <div className="flex h-full flex-col items-center justify-center pt-[1px] pr-[13px] leading-[14.4px] whitespace-nowrap">
          {lines.map((l) => (
            <div key={l}>{l}</div>
          ))}
        </div>
      </div>
    </div>
  );
}

const DATA = ["{60, 0, 0}", "{-30.0, 51.961524, 0}", "{-30, -51.961524, 0}", "{0, 0, 80}"];

function DataPanel() {
  return (
    <div className="absolute top-[564px] left-[1167.5px] h-[132px] w-[210px]">
      <Dot x={0} y={66} />
      <Dot x={210} y={66} />
      <div className={PANEL_BOX}>
        <div className="h-[22px] bg-[#e6e175] pr-[13px] text-right leading-[22px]">{"{0;0}"}</div>
        {DATA.map((d, i) => (
          <div key={d} className={i % 2 ? "flex h-[21px] bg-[#f2ec79] leading-[21px]" : "flex h-[21px] leading-[21px]"}>
            <span className="w-[11px] pl-[1.5px]">{i}</span>
            <span className="whitespace-pre">{d}</span>
          </div>
        ))}
        <div className="absolute inset-y-0 left-[9.5px] w-px bg-[#d3cd68]" />
      </div>
    </div>
  );
}

/* ------------------------------------------------------------------ */
/* Canvas widgets                                                      */
/* ------------------------------------------------------------------ */

function Hex({ children }: { children: React.ReactNode }) {
  return (
    <svg viewBox="0 0 48 44" className="h-[44px] w-[48px]">
      <path d="M12 1 H36 L47.5 22 L36 43 H12 L.5 22 Z" fill="#1c1c1c" />
      <path d="M14 4 H34 L44 22 L34 40 H14 L4 22 Z" fill="#363636" stroke="#6a6a6a" strokeWidth={1.2} />
      {children}
    </svg>
  );
}

function Markov() {
  return (
    <div className="absolute top-[1671px] left-[114px] flex h-[57px] w-[293px] items-center border-y-2 border-r-2 border-black bg-[linear-gradient(#ffffff_0%,#d9d9d9_37%,#bfbfbf_38%,#a6a6a6_100%)] pl-[4px]">
      <div className="flex gap-[8px]">
        <Hex>
          <path d="M13 14 L24 9 L36 13 V29 L24 36 L13 31 Z" fill="#cfcfcf" stroke="#f2f2f2" strokeWidth={2} />
          <path d="M25 19 L35 14 V29 L25 35 Z" fill="#4c4c4c" />
          <path d="M14 15 L25 19 L35 14 L24 10 Z" fill="#f0f0f0" />
        </Hex>
        <Hex>
          <circle cx={24} cy={22} r={17} fill="#2a2a2a" />
          <path
            d="M24 22 C24 19 28 19 28 23 C28 28 20 28 19 22 C19 15 29 13 32 20 C35 29 24 35 17 30 C10 24 13 12 22 9 C32 7 39 14 39 22"
            fill="none"
            stroke="#b5b5b5"
            strokeWidth={2.4}
          />
        </Hex>
        <svg viewBox="0 0 48 44" className="h-[44px] w-[48px]">
          <text x={25} y={24} textAnchor="middle" fontFamily="Liberation Serif" fontWeight={700} fontSize={26} fill="#2e2e2e">
            X
          </text>
          <path d="M13 35.5 H30" stroke="#000" strokeWidth={3.4} />
          <path d="M41 35.5 L29 30 V41 Z" fill="#000" />
          <rect x={8} y={32} width={6.5} height={6.5} rx={1.5} fill="#fff" stroke="#000" strokeWidth={2} />
        </svg>
        <Hex>
          <circle cx={24} cy={23} r={12} fill="#fff" />
          <path d="M30.5 16 A8.5 8.5 0 0 1 17.5 28 Z" fill="#262626" />
        </Hex>
        <svg viewBox="0 0 48 44" className="h-[44px] w-[48px]">
          <rect x={13} y={10} width={25} height={25} fill="#f6c23c" stroke="#b23a1c" strokeWidth={2.4} />
          <path d="M12 35.5 V12 M12 35.5 H32" stroke="#000" strokeWidth={4} />
          <path d="M12 4 L17.5 15 H6.5 Z M41 35.5 L30 30 V41 Z" fill="#000" />
          <rect x={9} y={32} width={6.5} height={6.5} rx={1.5} fill="#fff" stroke="#000" strokeWidth={2} />
        </svg>
      </div>
      <div className="absolute inset-y-0 right-0 w-[11px] bg-linear-to-b from-[#e0e0e0] from-0% via-[#999] via-38% to-[#8f8f8f]" />
    </div>
  );
}

function Compass() {
  return (
    <svg viewBox="0 0 110 110" className="absolute top-[1618px] left-[3107px] h-[110px] w-[110px]">
      <defs>
        <radialGradient id="knob">
          <stop offset="0" stopColor="#ececec" />
          <stop offset="1" stopColor="#868686" />
        </radialGradient>
      </defs>
      <path d="M18 54 C17 34 30 16 48 9" fill="none" stroke="#000" strokeWidth={7} strokeLinecap="round" />
      <circle cx={43} cy={10} r={5} />
      <circle cx={49} cy={8} r={5} />
      <circle cx={34} cy={16} r={5} />
      <path d="M3 19 L17 17.5 L20 29 L9 31.5 Z" />
      <circle cx={59.5} cy={50} r={39.5} fill="#fff" stroke="#2e2e2e" strokeWidth={1.8} />
      <circle cx={59.5} cy={50} r={35.5} fill="url(#knob)" />
      <path d="M70 15 V27 L81 21 Z M22 37 H35 L28 26 Z M83 62 H95 L89 73 Z M47 85 V73 L36 80 Z" fill="#fff" />
    </svg>
  );
}

function Canvas() {
  return (
    <div className="relative h-[1314px] shrink-0 overflow-hidden border-x-2 border-[#d3d1d7] bg-[#dcd9d1] font-[Inter]">
      <div className="absolute top-[-414px] left-[-114px] h-[1926px] w-[3340px]">
        <svg className="absolute inset-0 h-[1926px] w-[3340px]" viewBox="0 0 3340 1926">
          <g fill="#000" fillOpacity={0.115}>
            {GRID_X.map(([x, w]) => (
              <rect key={x} x={x} y={414} width={w} height={1314} />
            ))}
            {GRID_Y.map(([y, h]) => (
              <rect key={y} x={114} y={y} width={3112} height={h} />
            ))}
          </g>
          {AREAS.map(([x, y, w, h]) => (
            <g key={x}>
              <rect x={x} y={y} width={w} height={h} fill="#b29bfe" fillOpacity={0.56} />
              <rect x={x + 0.5} y={y + 0.5} width={w - 1} height={h - 1} fill="none" stroke="#8e80c0" strokeOpacity={0.8} />
            </g>
          ))}
          <g fill="none" stroke="#000" strokeOpacity={0.6}>
            {WIRES.map((w, i) => (
              <path key={i} d={wirePath(w)} strokeWidth={w[4] ?? 3.8} />
            ))}
          </g>
        </svg>
        <DataPanel />
        <Note
          x={1001.5}
          y={732}
          w={202}
          h={95}
          lines={["Why the Deconstruct Data", "doesn't match with the output?", "only one surface is being", "deconstruct."]}
        />
        <Note x={2086} y={684} w={397} h={61} lines={["How to offset on the direction of a surface?"]} />
        <Note x={2167.5} y={879} w={396.5} h={61} lines={["edges==>curves==>offset on surface"]} />
        {SLIDERS.map((s, i) => (
          <Slider key={i} s={s} />
        ))}
        {PARAMS.map((p, i) => (
          <Param key={i} p={p} />
        ))}
        {COMPS.map((n, i) => (
          <Component key={i} n={n} />
        ))}
        <Markov />
        <Compass />
      </div>
    </div>
  );
}

/* ------------------------------------------------------------------ */
/* Window                                                              */
/* ------------------------------------------------------------------ */

function StatusBar() {
  return (
    <div className="flex flex-1 items-center border-t-2 border-[#d3d1d7] bg-[#ece9f0] pb-[3px] pl-[4px] font-[Inter] text-[23.9px] leading-none text-[#242424]">
      <svg viewBox="0 0 32 32" className="h-8 w-8">
        <defs>
          <radialGradient id="info">
            <stop offset="0" stopColor="#8fe6ee" />
            <stop offset="0.55" stopColor="#3d9fd0" />
            <stop offset="1" stopColor="#1a2f9c" />
          </radialGradient>
        </defs>
        <circle cx={16} cy={16} r={15} fill="url(#info)" stroke="#12209a" strokeWidth={2} />
        <rect x={13} y={5} width={6} height={13} rx={2.6} fill="#d9f3fb" stroke="#152a8c" strokeWidth={1.8} />
        <circle cx={16} cy={24} r={3.2} fill="#d9f3fb" stroke="#152a8c" strokeWidth={1.8} />
      </svg>
      <span className="ml-[4px] flex-1 pb-[2px]">Autosave complete (19 seconds ago)</span>
      <span className="pr-[141px] pb-[2px]">1.0.0007</span>
    </div>
  );
}

export default function App() {
  return (
    <div className="h-[1926px] w-[3340px] overflow-hidden bg-white pt-[76px] pl-[112px]">
      <div className="flex h-[1702px] w-[3116px] flex-col overflow-hidden rounded-[22px] bg-[#ece9f0] font-['Liberation_Sans'] text-[22.6px] shadow-[0_0_0_1px_rgba(0,0,0,0.22),0_0_3px_rgba(0,0,0,0.3),0_36px_90px_rgba(0,0,0,0.5)]">
        <div className="relative flex h-[56px] shrink-0 items-center justify-center border-b-2 border-[#d0ced3] bg-[#f0eef5] font-[Inter]">
          <div className="absolute left-[16px] flex gap-[16px]">
            <div className="h-6 w-6 rounded-full border border-[#d5564b] bg-[#ed6b60]" />
            <div className="h-6 w-6 rounded-full border border-[#dca53d] bg-[#f5bf4f]" />
            <div className="h-6 w-6 rounded-full border border-[#52a944] bg-[#61c554]" />
          </div>
          <span className="text-[26.8px] leading-none font-bold text-[#464547]">Grasshopper - Yanru_Project1_Final*</span>
        </div>
        <TabStrip />
        <Ribbon />
        <Toolbar />
        <Canvas />
        <StatusBar />
      </div>
    </div>
  );
}
